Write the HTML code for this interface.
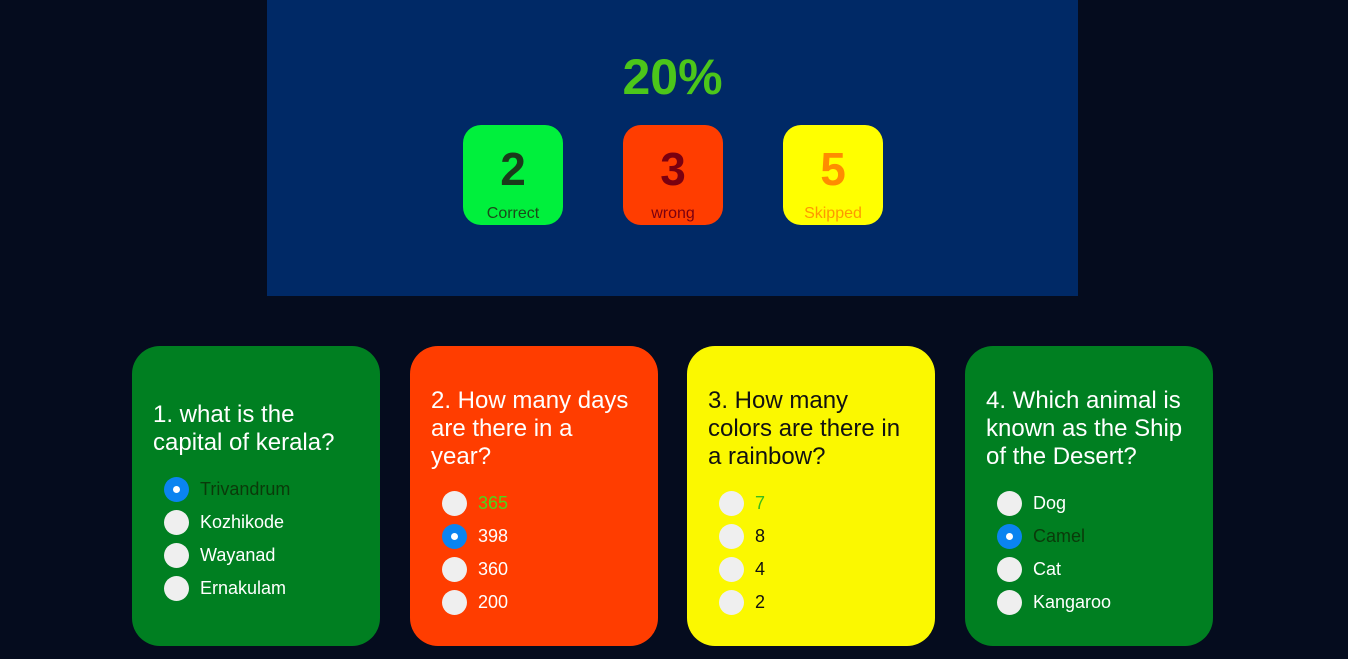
<!DOCTYPE html>
<html><head><style>
*{margin:0;padding:0;box-sizing:border-box}
body{width:1348px;height:659px;background:#050c1e;font-family:"Liberation Sans",Arial,sans-serif;position:relative;overflow:hidden}
.top{position:absolute;left:267px;top:0;width:811px;height:296px;background:#002966}
.pct{position:absolute;left:0;width:811px;top:48px;text-align:center;font-size:50px;font-weight:bold;color:#4cc61a}
.box{position:absolute;top:125px;width:100px;height:100px;border-radius:18px;text-align:center}
.box .n{position:absolute;top:17px;width:100%;font-size:46px;font-weight:bold}
.box .l{position:absolute;top:80px;width:100%;font-size:16px}
.card{position:absolute;top:346px;width:248px;height:300px;border-radius:28px;display:flex;flex-direction:column;justify-content:center;padding-left:21px;padding-top:10px}
.q{font-size:24px;line-height:28px;color:#fff;width:205px;margin-bottom:20px}
.o{position:relative;height:33px;padding-left:47px;font-size:18px;line-height:25px}
.r{position:absolute;left:11px;top:0;width:25px;height:25px;border-radius:50%;background:#efefef}
.r.s{background:#0a84f0}
.r.s::after{content:"";position:absolute;left:9px;top:9px;width:7px;height:7px;border-radius:50%;background:#fff}
</style></head><body>
<div class="top">
<div class="pct">20%</div>
<div class="box" style="left:196px;background:#00f03c"><div class="n" style="color:#1a3a1a">2</div><div class="l" style="color:#1a4a1a">Correct</div></div>
<div class="box" style="left:356px;background:#ff3d00"><div class="n" style="color:#7a0010">3</div><div class="l" style="color:#7a0010">wrong</div></div>
<div class="box" style="left:516px;background:#ffff00"><div class="n" style="color:#ff8c00">5</div><div class="l" style="color:#ff9800">Skipped</div></div>
</div>
<div class="card" style="left:132px;background:#007f21">
<div class="q">1. what is the capital of kerala?</div>
<div class="o" style="color:#0a3a0a"><span class="r s"></span>Trivandrum</div>
<div class="o" style="color:#fff"><span class="r"></span>Kozhikode</div>
<div class="o" style="color:#fff"><span class="r"></span>Wayanad</div>
<div class="o" style="color:#fff;height:25px"><span class="r"></span>Ernakulam</div>
</div>
<div class="card" style="left:410px;background:#ff3d00">
<div class="q">2. How many days are there in a year?</div>
<div class="o" style="color:#4cd61a"><span class="r"></span>365</div>
<div class="o" style="color:#fff"><span class="r s"></span>398</div>
<div class="o" style="color:#fff"><span class="r"></span>360</div>
<div class="o" style="color:#fff;height:25px"><span class="r"></span>200</div>
</div>
<div class="card" style="left:687px;background:#fbf800">
<div class="q" style="color:#111">3. How many colors are there in a rainbow?</div>
<div class="o" style="color:#3cbc1a"><span class="r"></span>7</div>
<div class="o" style="color:#111"><span class="r"></span>8</div>
<div class="o" style="color:#111"><span class="r"></span>4</div>
<div class="o" style="color:#111;height:25px"><span class="r"></span>2</div>
</div>
<div class="card" style="left:965px;background:#007f21">
<div class="q">4. Which animal is known as the Ship of the Desert?</div>
<div class="o" style="color:#fff"><span class="r"></span>Dog</div>
<div class="o" style="color:#0a3a0a"><span class="r s"></span>Camel</div>
<div class="o" style="color:#fff"><span class="r"></span>Cat</div>
<div class="o" style="color:#fff;height:25px"><span class="r"></span>Kangaroo</div>
</div>
</body></html>
